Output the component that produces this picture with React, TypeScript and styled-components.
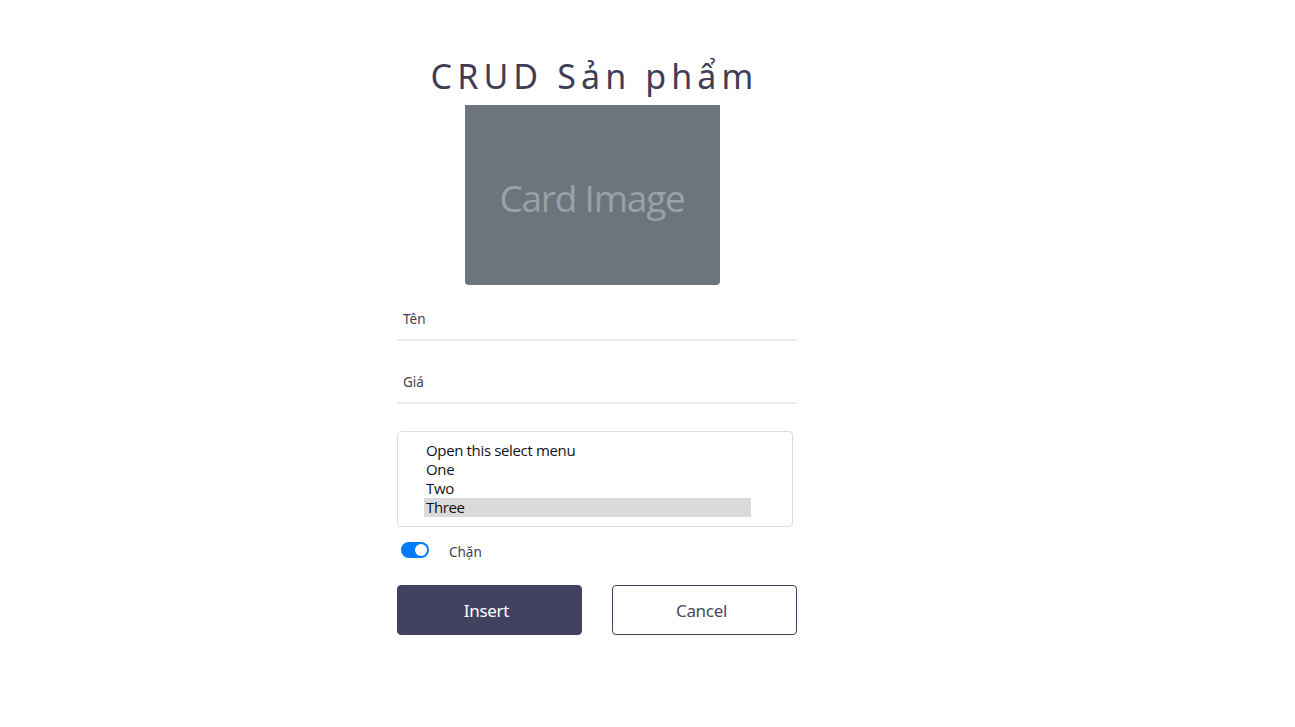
import React from "react";
import styled, { createGlobalStyle } from "styled-components";

const Global = createGlobalStyle`
  html, body { margin: 0; padding: 0; background: #fff; }
  body { font-family: "Noto Sans", "Open Sans", sans-serif; color: #3f3d56; }
`;

const Page = styled.div`
  display: flex;
  justify-content: flex-start;
  padding: 50px 0 0 397px;
`;

const Column = styled.form`
  width: 400px;
  display: flex;
  flex-direction: column;
`;

const Header = styled.div`
  width: 390px;
  display: flex;
  flex-direction: column;
  align-items: center;
`;

const Title = styled.h1`
  margin: 0 0 2px;
  font-family: "Noto Sans", sans-serif;
  font-weight: 400;
  font-size: 34px;
  line-height: 53px;
  letter-spacing: 5.1px;
  color: #3f3d56;
  padding-left: 5px;
`;

const CardImage = styled.div`
  width: 255px;
  height: 180px;
  background: #6c757d;
  border-radius: 0 0 4px 4px;
  display: flex;
  align-items: center;
  justify-content: center;
  color: #9aa1aa;
  font-family: "Open Sans", sans-serif;
  font-size: 37px;
  letter-spacing: -1.2px;
  padding-top: 4px;
  box-sizing: border-box;
`;

const Field = styled.label<{ $mt: number }>`
  display: flex;
  align-items: center;
  height: 40px;
  padding-left: 6px;
  border-bottom: 2px solid #ebebef;
  font-size: 13.5px;
  color: #3f3d56;
  margin-top: ${(p) => p.$mt}px;
`;

const ListBox = styled.div`
  margin-top: 27px;
  width: 396px;
  height: 96px;
  box-sizing: border-box;
  border: 1px solid #dcdce0;
  border-radius: 4px;
  padding: 9px 41px 0 26px;
  display: flex;
  flex-direction: column;
`;

const Option = styled.div<{ $selected?: boolean }>`
  height: 19px;
  line-height: 19px;
  padding-left: 2px;
  font-family: "Open Sans", sans-serif;
  font-size: 15px;
  letter-spacing: -0.35px;
  color: #111;
  background: ${(p) => (p.$selected ? "#dadada" : "transparent")};
`;

const SwitchRow = styled.div`
  display: flex;
  align-items: center;
  gap: 20px;
  margin-top: 13px;
  padding-left: 4px;
  height: 20px;
`;

const Switch = styled.span`
  position: relative;
  width: 28px;
  height: 16px;
  border-radius: 8px;
  background: #007bff;
  display: inline-block;
  &::after {
    content: "";
    position: absolute;
    right: 2px;
    top: 2px;
    width: 12px;
    height: 12px;
    border-radius: 50%;
    background: #fff;
  }
`;

const SwitchLabel = styled.span`
  font-size: 13.5px;
  color: #3f3d56;
  padding-top: 3px;
`;

const Buttons = styled.div`
  display: flex;
  gap: 30px;
  margin-top: 25px;
`;

const Button = styled.button<{ $primary?: boolean }>`
  width: 185px;
  height: 50px;
  border-radius: 4px;
  font-family: "Noto Sans", sans-serif;
  font-size: 17px;
  letter-spacing: -0.3px;
  padding: 0 6px 0 0;
  cursor: pointer;
  border: 1px solid #424060;
  background: ${(p) => (p.$primary ? "#434160" : "#fff")};
  color: ${(p) => (p.$primary ? "#fff" : "#4a4862")};
`;

export default function App() {
  return (
    <>
      <Global />
      <Page>
        <Column onSubmit={(e) => e.preventDefault()}>
          <Header>
            <Title>CRUD Sản phẩm</Title>
            <CardImage>Card Image</CardImage>
          </Header>
          <Field $mt={14}>Tên</Field>
          <Field $mt={21}>Giá</Field>
          <ListBox>
            <Option>Open this select menu</Option>
            <Option>One</Option>
            <Option>Two</Option>
            <Option $selected>Three</Option>
          </ListBox>
          <SwitchRow>
            <Switch />
            <SwitchLabel>Chặn</SwitchLabel>
          </SwitchRow>
          <Buttons>
            <Button $primary type="button">Insert</Button>
            <Button type="button">Cancel</Button>
          </Buttons>
        </Column>
      </Page>
    </>
  );
}
